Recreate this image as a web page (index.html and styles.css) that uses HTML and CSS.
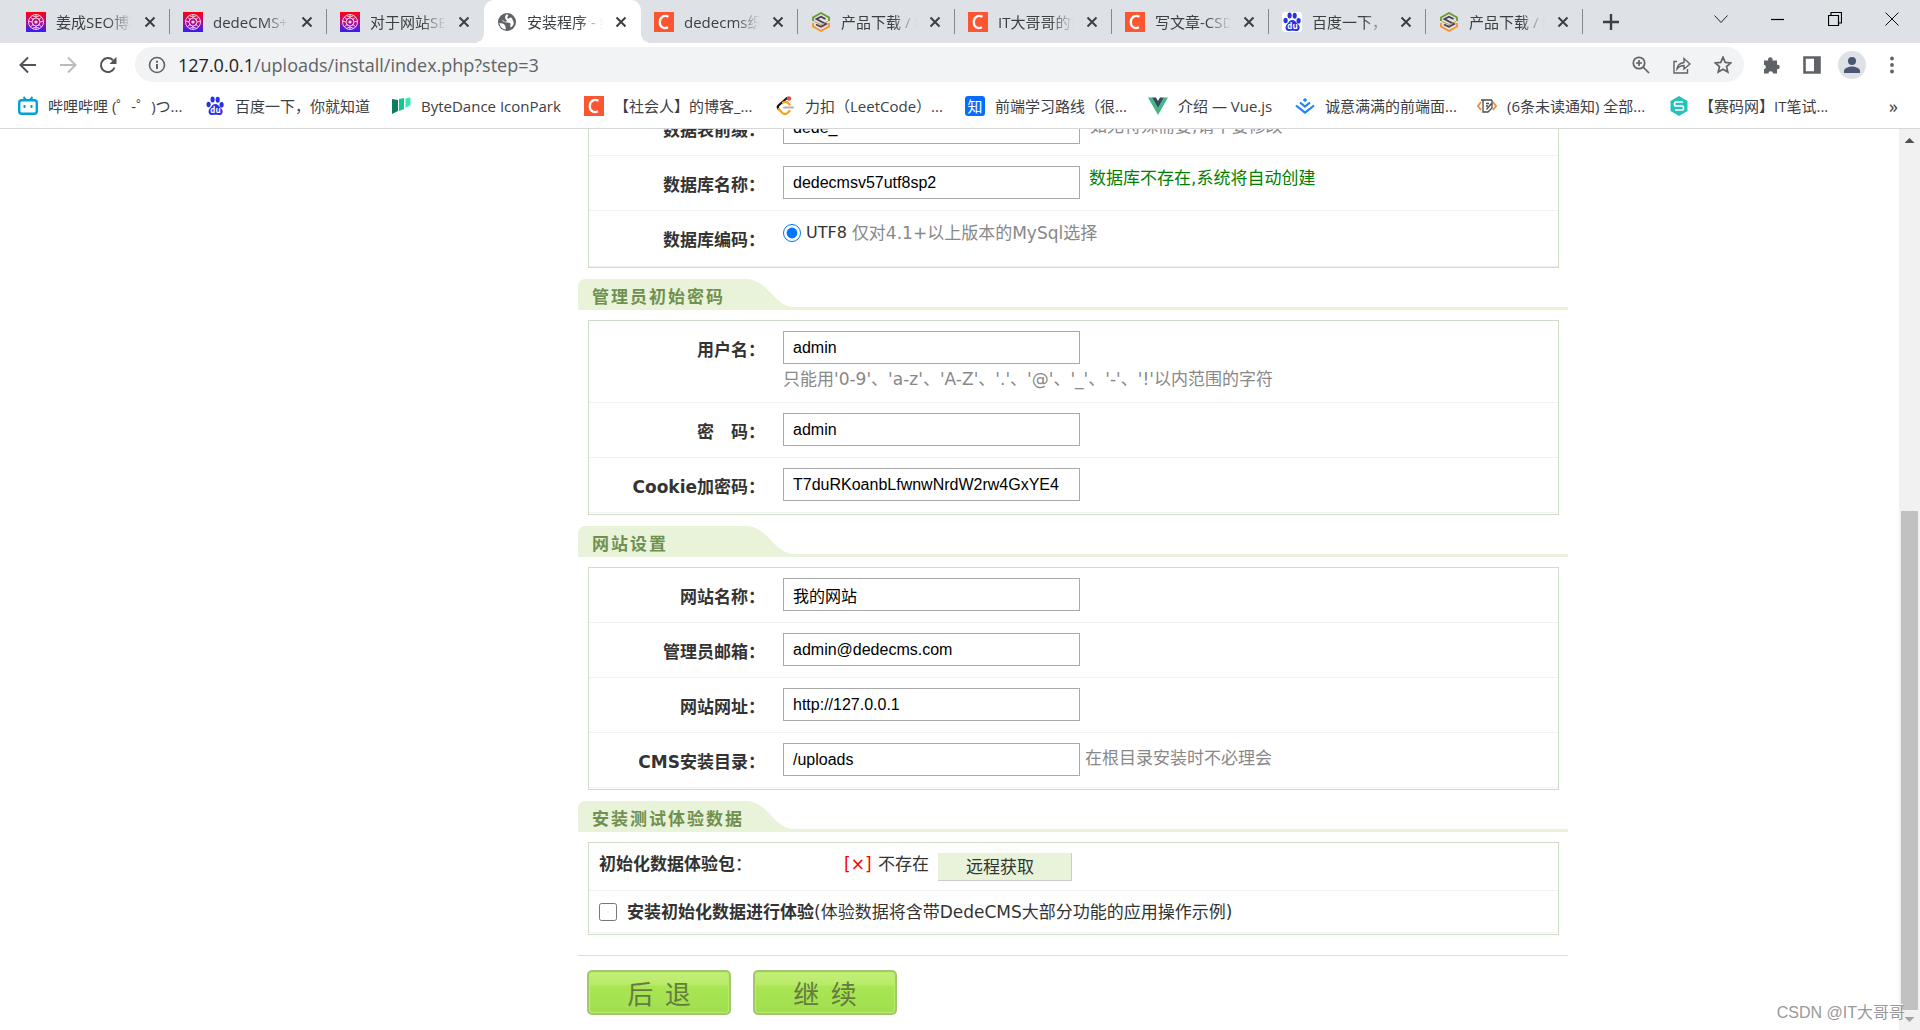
FILE: index.html
```html
<!DOCTYPE html>
<html lang="zh-CN">
<head>
<meta charset="utf-8">
<title>安装程序</title>
<link rel="stylesheet" href="styles.css">
</head>
<body>
<svg class="defs" aria-hidden="true">
  <defs>
    <linearGradient id="seo-bg" x1="0" y1="0" x2="0" y2="1"><stop offset="0" stop-color="#ff0010"/><stop offset=".5" stop-color="#b01090"/><stop offset="1" stop-color="#2a20ff"/></linearGradient>
    <linearGradient id="dede-bg" x1="0" y1="0" x2="0" y2="1"><stop offset="0" stop-color="#5f9a2c"/><stop offset=".3" stop-color="#8fa32c"/><stop offset=".5" stop-color="#4a3a55"/><stop offset=".7" stop-color="#f0902a"/><stop offset="1" stop-color="#ff8a1e"/></linearGradient>
  </defs>
  <symbol id="seo" viewBox="0 0 20 20"><rect width="20" height="20" fill="url(#seo-bg)"/><g fill="none" stroke="#ffc4dc" stroke-width="1"><circle cx="10" cy="10" r="7.5"/><circle cx="10" cy="10" r="4"/><path d="M4 5l4 3M16 5l-4 3M4 15l4-3M16 15l-4-3M10 2v4M10 14v4M2 9l4 1M18 9l-4 1M6 3.500q4 3 8 0M6 16.500q4-3 8 0"/></g><circle cx="10" cy="10" r="1.600" fill="#ffd9e6"/></symbol>
  <symbol id="csdn" viewBox="0 0 20 20"><rect width="20" height="20" fill="#fc5531"/><path d="M14.500 4.800C10 2.500 5.800 5 5.800 10.200c0 5 4 7 8.200 5.100" fill="none" stroke="#fff" stroke-width="2.300"/></symbol>
  <symbol id="dede" viewBox="0 0 20 20"><g fill="none" stroke-width="1.800"><path d="M2 9V5.500L10 1l8 4.500V9" stroke="#6b9a2c"/><path d="M2 11v3.500l8 4.500 8-4.500V11" stroke="#ff8f1f"/><path d="M14.500 7L10 4.800 5.500 7 10 9.500l5 2.500-5 2.700L5 12.500" stroke="#4a3f50"/><path d="M3 9.500l7 3 7-3" stroke="#c99a45" stroke-width="1"/></g></symbol>
  <symbol id="baidu" viewBox="0 0 20 20"><g fill="#2932e1"><ellipse cx="3.600" cy="8.500" rx="2.100" ry="2.800"/><ellipse cx="7.600" cy="3.600" rx="2.100" ry="3"/><ellipse cx="12.700" cy="3.700" rx="2.100" ry="3"/><ellipse cx="16.600" cy="8.800" rx="2.100" ry="2.800"/><path d="M10 8c-2.500 0-3 2.300-4.800 4-2.400 2.200-2.300 7 1.600 7 2 0 4.400-.4 6.500 0 4.300.7 5.600-3.800 3-6.500C13.700 10 13 8 10 8z"/></g><text x="10.500" y="17.200" text-anchor="middle" font-family="Open Sans" font-size="8" font-weight="700" fill="#fff">du</text></symbol>
  <symbol id="close" viewBox="0 0 12 12"><path d="M1.500 1.500l9 9M10.500 1.500l-9 9" stroke="#3c4043" stroke-width="2"/></symbol>
</svg>

<header class="browser">
  <div class="tabstrip">
    <nav class="tabs" aria-label="标签页">
      <div class="tab"><svg class="fav"><use href="#seo"/></svg><span class="tab-name">姜成SEO博客</span><button class="tab-x" aria-label="关闭"><svg><use href="#close"/></svg></button></div>
      <div class="tab"><svg class="fav"><use href="#seo"/></svg><span class="tab-name">dedeCMS+</span><button class="tab-x" aria-label="关闭"><svg><use href="#close"/></svg></button></div>
      <div class="tab"><svg class="fav"><use href="#seo"/></svg><span class="tab-name">对于网站SEO</span><button class="tab-x" aria-label="关闭"><svg><use href="#close"/></svg></button></div>
      <div class="tab active"><svg class="fav" viewBox="0 0 20 20"><circle cx="10" cy="10" r="9" fill="#5f6368"/><path d="M9 2.500c3-.5 2.500 1 1.500 2.500s.5 2 2 1 2.500-.2 3 1.500c1.500 3 2 5-1 7.500-1.500 1-1.500-1-1-2.500s-2-2-4-2-4-1-5-3l3 2c2 1 3-1 1.500-2S8 5 9 2.500zM2.500 11c3 0 5 1 5.500 2.500S9 16 8.500 17.500C5 17 2.500 14 2.500 11z" fill="#fff"/></svg><span class="tab-name">安装程序 - 织梦</span><button class="tab-x" aria-label="关闭"><svg><use href="#close"/></svg></button></div>
      <div class="tab"><svg class="fav"><use href="#csdn"/></svg><span class="tab-name">dedecms织梦</span><button class="tab-x" aria-label="关闭"><svg><use href="#close"/></svg></button></div>
      <div class="tab"><svg class="fav"><use href="#dede"/></svg><span class="tab-name">产品下载 / 织</span><button class="tab-x" aria-label="关闭"><svg><use href="#close"/></svg></button></div>
      <div class="tab"><svg class="fav"><use href="#csdn"/></svg><span class="tab-name">IT大哥哥的博</span><button class="tab-x" aria-label="关闭"><svg><use href="#close"/></svg></button></div>
      <div class="tab"><svg class="fav"><use href="#csdn"/></svg><span class="tab-name">写文章-CSDN</span><button class="tab-x" aria-label="关闭"><svg><use href="#close"/></svg></button></div>
      <div class="tab"><svg class="fav fav-white"><use href="#baidu"/></svg><span class="tab-name">百度一下，你</span><button class="tab-x" aria-label="关闭"><svg><use href="#close"/></svg></button></div>
      <div class="tab"><svg class="fav"><use href="#dede"/></svg><span class="tab-name">产品下载 / 织</span><button class="tab-x" aria-label="关闭"><svg><use href="#close"/></svg></button></div>
    </nav>
    <button class="new-tab" aria-label="新标签页"><svg width="16" height="16"><path d="M8 0v16M0 8h16" stroke="#3c4043" stroke-width="2.400"/></svg></button>
    <div class="window-buttons">
      <button aria-label="搜索标签页"><svg width="14" height="14"><path d="M.5 3.500l6.500 7 6.500-7" fill="none" stroke="#222"/></svg></button>
      <button aria-label="最小化"><svg width="14" height="14"><path d="M0 7.500h13" stroke="#000" stroke-width="1.200"/></svg></button>
      <button aria-label="还原"><svg width="14" height="14"><path d="M.5 3.500h10v10H.500zM3 3V.500h10.500v10.500H11" fill="none" stroke="#000" stroke-width="1.200"/></svg></button>
      <button aria-label="关闭窗口"><svg width="14" height="14"><path d="M.5.500l13 13M13.500.500l-13 13" stroke="#111"/></svg></button>
    </div>
  </div>

  <div class="toolbar">
    <button class="tool" aria-label="后退"><svg viewBox="0 0 18 18"><path d="M17 9H2M9 1.500L1.500 9 9 16.500" fill="none" stroke="#50545a" stroke-width="2"/></svg></button>
    <button class="tool" aria-label="前进"><svg viewBox="0 0 18 18"><path d="M1 9h15M9 1.500L16.500 9 9 16.500" fill="none" stroke="#b9bbbe" stroke-width="2"/></svg></button>
    <button class="tool" aria-label="刷新"><svg viewBox="0 0 18 18"><path d="M15.500 11.500A7 7 0 1 1 14 4.200" fill="none" stroke="#50545a" stroke-width="2"/><path d="M17.500.800V8H10.500z" fill="#50545a"/></svg></button>
    <div class="omnibox">
      <svg class="info" viewBox="0 0 18 18"><circle cx="9" cy="9" r="7.500" fill="none" stroke="#5f6368" stroke-width="1.600"/><path d="M9 8v5M9 4.800v2" stroke="#5f6368" stroke-width="2"/></svg>
      <span class="url"><span class="host">127.0.0.1</span>/uploads/install/index.php?step=3</span>
      <button class="omni-btn" aria-label="缩放"><svg viewBox="0 0 18 18"><circle cx="7" cy="7" r="5.700" fill="none" stroke="#5f6368" stroke-width="1.700"/><path d="M11 11l6 6M4 7h6M7 4v6" stroke="#5f6368" stroke-width="1.700"/></svg></button>
      <button class="omni-btn" aria-label="分享"><svg viewBox="0 0 18 18"><path d="M4 5.500H1V17h13.500v-4M4 13c.5-4 3-6 7-6.500V2.500l6 5.500-6 5V9.500c-3 0-5 1-7 3.500z" fill="none" stroke="#5f6368" stroke-width="1.400"/></svg></button>
      <button class="omni-btn" aria-label="收藏"><svg viewBox="0 0 18 18"><path d="M9 1.200l2.200 5.200 5.600.500-4.300 3.700 1.300 5.500L9 13.200l-4.800 2.900 1.300-5.500L1.200 6.900l5.600-.5z" fill="none" stroke="#5f6368" stroke-width="1.700"/></svg></button>
    </div>
    <button class="tool" aria-label="扩展程序"><svg viewBox="0 0 18 18"><path d="M1 4.500h4.200a2.300 2.300 0 1 1 4.200 0H14v4.300a2.200 2.200 0 1 1 0 4.300V17.500H10a2.300 2.300 0 0 0-4.600 0H1v-4.300a2.300 2.300 0 0 0 0-4.500z" fill="#5f6368"/></svg></button>
    <button class="tool" aria-label="侧边栏"><svg viewBox="0 0 18 18"><path d="M1.500 1.500h15v15h-15z" fill="#fff" stroke="#5f6368" stroke-width="2.600"/><path d="M11 1h6v16h-6z" fill="#5f6368"/></svg></button>
    <button class="tool avatar" aria-label="用户"><svg viewBox="0 0 18 18"><circle cx="9" cy="5" r="4" fill="#4a5672"/><path d="M1 17v-2c0-3 5-4.500 8-4.500s8 1.500 8 4.500v2z" fill="#4a5672"/></svg></button>
    <button class="tool" aria-label="菜单"><svg viewBox="0 0 18 18"><g fill="#5f6368"><circle cx="9" cy="2.500" r="1.900"/><circle cx="9" cy="9" r="1.900"/><circle cx="9" cy="15.500" r="1.900"/></g></svg></button>
  </div>

  <nav class="bookmarks" aria-label="书签">
    <a href="#"><svg class="fav" viewBox="0 0 20 20"><path d="M5.500 1L8 4M14.500 1L12 4" stroke="#00a1d6" stroke-width="2"/><rect x="1.200" y="4.200" width="17.600" height="13.600" rx="2.500" fill="#fff" stroke="#00a1d6" stroke-width="2.400"/><path d="M6.500 9v3M13.500 9v3" stroke="#00a1d6" stroke-width="2"/></svg>哔哩哔哩 (゜-゜)つ...</a>
    <a href="#"><svg class="fav"><use href="#baidu"/></svg>百度一下，你就知道</a>
    <a href="#"><svg class="fav" viewBox="0 0 20 20"><path d="M1 3l6 1v11l-6 3z" fill="#0c7d5c"/><path d="M8 3l5-1v11l-5 2z" fill="#10c78f"/><path d="M14.500 2.500l5-1v8l-5 2z" fill="#34e8b8"/></svg>ByteDance IconPark</a>
    <a href="#"><svg class="fav"><use href="#csdn"/></svg>【社会人】的博客_...</a>
    <a href="#"><svg class="fav" viewBox="0 0 20 20"><g fill="none" stroke-width="2.200" stroke-linecap="round"><path d="M12 2L3.500 9.500q-1.500 1.500 0 3.500" stroke="#111"/><path d="M3.500 13l4 4q2.500 2 5 0l2-2M8 6.500q3-1.500 5 .5l1.500 1.500" stroke="#f9a01b"/><path d="M9 11.500h9" stroke="#b3b3b3"/></g><circle cx="14" cy="2.500" r="2.300" fill="#e0504a"/></svg>力扣（LeetCode）...</a>
    <a href="#"><span class="fav zhihu">知</span>前端学习路线（很...</a>
    <a href="#"><svg class="fav" viewBox="0 0 20 20"><path d="M0 1.500h4l6 10.500 6-10.500h4L10 19z" fill="#41b883"/><path d="M4 1.500h4l2 3.500 2-3.500h4L10 12z" fill="#35495e"/></svg>介绍 — Vue.js</a>
    <a href="#"><svg class="fav" viewBox="0 0 20 20"><path d="M10 2l2.300 2L10 6 7.700 4z" fill="#1e80ff"/><path d="M5 6.500l5 4 5-4M1 9.500l9 7 9-7" fill="none" stroke="#1e80ff" stroke-width="2.200"/></svg>诚意满满的前端面...</a>
    <a href="#"><svg class="fav" viewBox="0 0 20 20"><path d="M4 6L1 10l3 4M16 6l3 4-3 4" fill="none" stroke="#f28a3a" stroke-width="1.800"/><path d="M4 4h11M6 4v12h5l4-4V4M9 7.500h3M9 10h2M9.500 13.500l5-6" fill="none" stroke="#4b4b4b" stroke-width="1.300"/></svg>(6条未读通知) 全部...</a>
    <a href="#"><svg class="fav" viewBox="0 0 20 20"><path d="M10 0l8.500 5v10L10 20l-8.500-5V5z" fill="#26c1b8"/><path d="M14 6H7q-1.500 0-1.500 2T7 10h6q1.500 0 1.500 2T13 14H6" fill="none" stroke="#fff" stroke-width="1.700"/></svg>【赛码网】IT笔试...</a>
    <button class="more" aria-label="更多书签">»</button>
  </nav>
</header>

<div class="viewport">
  <main class="page">
    <form class="install">
      <section class="box">
        <div class="row"><label for="prefix">数据表前缀：</label><div class="field"><input type="text" id="prefix" value="dede_"><span class="hint wide">如无特殊需要,请不要修改</span></div></div>
        <div class="row"><label for="dbname">数据库名称：</label><div class="field"><input type="text" id="dbname" value="dedecmsv57utf8sp2"><span class="notice">数据库不存在,系统将自动创建</span></div></div>
        <div class="row charset"><label for="utf8">数据库编码：</label><div class="field"><input type="radio" id="utf8" name="lang" checked><span class="option">UTF8</span><span class="hint">仅对4.1+以上版本的MySql选择</span></div></div>
      </section>

      <h2><span>管理员初始密码</span></h2>
      <section class="box padded">
        <div class="row"><label for="user">用户名：</label><div class="field stacked"><input type="text" id="user" value="admin"><span class="rule">只能用'0-9'、'a-z'、'A-Z'、'.'、'@'、'_'、'-'、'!'以内范围的字符</span></div></div>
        <div class="row"><label for="pwd">密　码：</label><div class="field"><input type="text" id="pwd" value="admin"></div></div>
        <div class="row"><label for="cookie">Cookie加密码：</label><div class="field"><input type="text" id="cookie" value="T7duRKoanbLfwnwNrdW2rw4GxYE4"></div></div>
      </section>

      <h2><span>网站设置</span></h2>
      <section class="box padded">
        <div class="row"><label for="site">网站名称：</label><div class="field"><input type="text" id="site" value="我的网站"></div></div>
        <div class="row"><label for="mail">管理员邮箱：</label><div class="field"><input type="text" id="mail" value="admin@dedecms.com"></div></div>
        <div class="row"><label for="url">网站网址：</label><div class="field"><input type="text" id="url" value="http://127.0.0.1"></div></div>
        <div class="row"><label for="dir">CMS安装目录：</label><div class="field"><input type="text" id="dir" value="/uploads"><span class="hint">在根目录安装时不必理会</span></div></div>
      </section>

      <h2><span>安装测试体验数据</span></h2>
      <section class="box padded">
        <div class="demo-row package"><span class="demo-name"><b>初始化数据体验包</b>：</span><span class="missing">[×]</span><span>不存在</span><button type="button" class="fetch">远程获取</button></div>
        <div class="demo-row"><input type="checkbox" id="demo"><label for="demo"><b>安装初始化数据进行体验</b>(体验数据将含带DedeCMS大部分功能的应用操作示例)</label></div>
      </section>

      <div class="actions">
        <button type="button">后&nbsp;&nbsp;退</button>
        <button type="button">继&nbsp;&nbsp;续</button>
      </div>
    </form>
  </main>
  <div class="scrollbar" aria-hidden="true"><i class="up"></i><div class="track"><div class="thumb"></div></div><i class="down"></i></div>
  <div class="watermark">CSDN @IT大哥哥</div>
</div>
</body>
</html>
```
FILE: styles.css
```css
* { box-sizing: border-box; }
body {
  margin: 0;
  height: 100vh;
  display: flex;
  flex-direction: column;
  overflow: hidden;
  background: #fff;
  color: #333;
  font: 17px/24px "DejaVu Sans", "Noto Sans CJK SC", sans-serif;
}
button { border: 0; padding: 0; background: none; font: inherit; color: inherit; }
.defs { position: absolute; width: 0; height: 0; }

/* Browser chrome */
.browser {
  flex: none;
  border-bottom: 1px solid #d5d7da;
  color: #3c4043;
  font: 15px/22px "Open Sans", "Noto Sans CJK SC", sans-serif;
}
.tabstrip { display: flex; height: 43px; padding-left: 13px; background: #dee1e6; }
.tabs { display: flex; }
.tab { position: relative; display: flex; align-items: center; width: 157px; padding-left: 13px; }
.tab:not(.active)::after { content: ""; position: absolute; right: 0; top: 9px; height: 25px; width: 1px; background: #85888d; }
.tab:has(+ .active)::after { display: none; }
.tab.active { background: #fff; border-radius: 10px 10px 0 0; }
.tab.active::before, .tab.active::after { content: ""; position: absolute; bottom: 0; width: 10px; height: 10px; }
.tab.active::before { left: -10px; background: radial-gradient(circle at 0 0, #dee1e6 10px, #fff 10px); }
.tab.active::after { right: -10px; background: radial-gradient(circle at 100% 0, #dee1e6 10px, #fff 10px); }
.fav { flex: none; width: 20px; height: 20px; margin-right: 10px; }
.fav-white { background: #fff; border-radius: 3px; }
.tab-name {
  width: 76px;
  overflow: hidden;
  white-space: nowrap;
  -webkit-mask-image: linear-gradient(90deg, #000 68%, transparent);
  mask-image: linear-gradient(90deg, #000 68%, transparent);
}
.tab-x { display: flex; margin-left: 12px; }
.tab-x svg { width: 12px; height: 12px; }
.new-tab { display: flex; align-items: center; margin-left: 20px; }
.window-buttons { display: flex; margin-left: auto; height: 38px; }
.window-buttons button { width: 57px; display: flex; align-items: center; justify-content: center; }

.toolbar { display: flex; align-items: center; height: 45px; padding: 0 8px 2px; }
.tool { width: 40px; height: 28px; display: flex; align-items: center; justify-content: center; }
.tool svg { width: 18px; height: 18px; }
.avatar { width: 28px; margin: 0 6px; border-radius: 50%; background: #dee1e6; }
.omnibox { flex: 1; display: flex; align-items: center; height: 35px; margin: 0 8px 0 7px; padding: 0 1px 0 13px; border-radius: 18px; background: #f1f3f4; }
.info { width: 18px; height: 18px; margin-right: 12px; }
.url { flex: 1; font-size: 18px; color: #5f6368; }
.host { color: #202124; }
.omni-btn { display: flex; justify-content: center; width: 41px; }
.omni-btn svg { width: 18px; height: 18px; }

.bookmarks { display: grid; grid-template-columns: 187px 186px 193px 191px 190px 183px 147px 182px 192px 190px 1fr; align-items: center; height: 40px; padding: 0 22px 4px 18px; }
.bookmarks a { display: flex; align-items: center; white-space: nowrap; color: #3c4043; text-decoration: none; }
.zhihu { border-radius: 3px; background: #0a6cff; color: #fff; font-size: 15px; line-height: 20px; text-align: center; }
.more { justify-self: end; font-size: 18px; }

/* Scrolled page */
.viewport { position: relative; flex: 1; min-height: 0; display: flex; overflow: hidden; }
.page { flex: 1; display: flex; justify-content: center; padding-left: 247px; }
.install { width: 990px; margin-top: -29px; }

.box { margin: 0 9px 0 10px; border: 1px solid #cfdcc8; }
.padded { padding-bottom: 1px; }
.row { display: flex; min-height: 55px; padding: 10px 0; border-bottom: 1px solid #f2f2f2; }
.row label { width: 176px; margin: 7px 18px 0 0; text-align: right; font-weight: 700; }
.field { display: flex; align-items: flex-start; }
.stacked { display: block; }
.field input[type=text] {
  display: block;
  width: 297px;
  height: 33px;
  padding: 0 9px;
  border: 1px solid #a9a9a9;
  background: #fff;
  color: #000;
  font: 16px "Liberation Sans", "Noto Sans CJK SC", sans-serif;
}
.hint, .rule { color: #888; }
.hint { margin: 3px 0 0 5px; }
.hint.wide { margin-left: 10px; }
.rule { display: block; margin-top: 3px; padding-bottom: 1px; }
.notice { margin-left: 9px; color: #008000; }
input[type=radio], input[type=checkbox] { flex: none; width: 18px; height: 18px; margin: 3px 5px 0 0; }
.charset { min-height: 56px; }
.option { font-size: 16px; }
.charset .hint { margin-top: 0; }

h2 {
  margin: 11px 0 10px;
  height: 31px;
  background: linear-gradient(#eaf3da, #eaf3da) bottom / 100% 3px no-repeat;
  color: #70904f;
  font-size: 17px;
  line-height: 36px;
  letter-spacing: 2px;
}
h2 span {
  display: block;
  width: 216px;
  height: 31px;
  padding-left: 14px;
  background: #e9f3da;
  clip-path: path("M8 0H168C190 0 196 28 216 28V31H6Q0 31 0 25V8Q0 0 8 0Z");
}

.demo-row { display: flex; height: 42px; padding: 9px 0 0 10px; border-bottom: 1px solid #f2f2f2; }
.demo-row input[type=checkbox] { margin-right: 10px; }
.package { height: 48px; }
.demo-name { width: 245px; }
.missing { width: 34px; color: #f00; }
.fetch { width: 134px; height: 28px; margin: 1px 0 0 9px; padding-left: 28px; border: solid #ccc; border-width: 0 1px 1px 0; background: #e9f3da; text-align: left; }

.actions { display: flex; gap: 22px; margin-top: 20px; padding: 14px 9px 20px; border-top: 1px solid #ddd; }
.actions button {
  width: 144px;
  height: 45px;
  border: 2px solid #a3c76e;
  border-radius: 5px;
  background: linear-gradient(#c4ef7a, #b8ea68 32%, #aae653 34%, #9fdf50);
  box-shadow: inset 0 0 0 1px #b9ee68;
  color: #647c40;
  font: 26px/38px "Noto Sans CJK SC", sans-serif;
}

.scrollbar { flex: none; width: 21px; display: flex; flex-direction: column; align-items: center; background: #f1f1f1; }
.track { flex: 1; width: 17px; display: flex; flex-direction: column; justify-content: flex-end; }
.thumb { height: 58%; background: #c1c1c1; }
.up, .down { width: 10px; height: 5px; }
.up { margin: 9px 0 6px; background: #505050; clip-path: polygon(50% 0, 100% 100%, 0 100%); }
.down { margin: 7px 0 8px; background: #a3a3a3; clip-path: polygon(0 0, 100% 0, 50% 100%); }
.watermark {
  position: absolute;
  right: 15px;
  bottom: 5px;
  color: #999;
  text-shadow: -1px -1px 0 #fff;
  font: 16px/24px "Liberation Sans", "Noto Sans CJK SC", sans-serif;
}
```
